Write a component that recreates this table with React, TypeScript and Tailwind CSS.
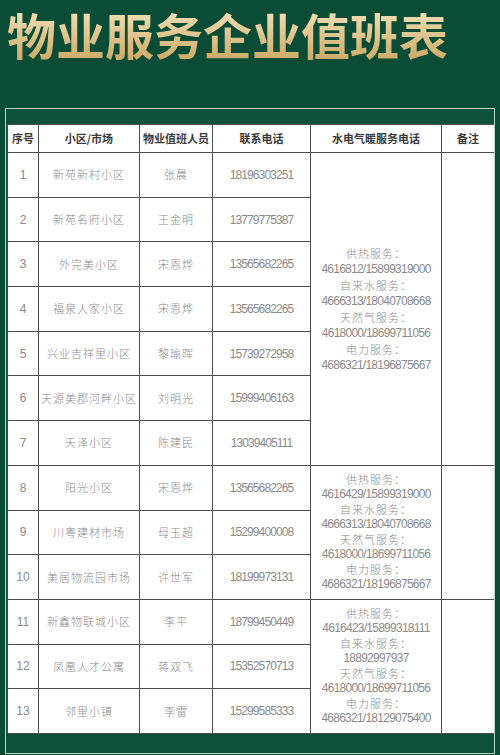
import React from "react";

type Row = { no: number; place: string; staff: string; phone: string };

const rows: Row[] = [
  { no: 1, place: "新苑新村小区", staff: "张晨", phone: "18196303251" },
  { no: 2, place: "新苑名府小区", staff: "王金明", phone: "13779775387" },
  { no: 3, place: "外完美小区", staff: "宋恩烨", phone: "13565682265" },
  { no: 4, place: "福泉人家小区", staff: "宋恩烨", phone: "13565682265" },
  { no: 5, place: "兴业吉祥里小区", staff: "黎瑜晖", phone: "15739272958" },
  { no: 6, place: "天源美郡河畔小区", staff: "刘明光", phone: "15999406163" },
  { no: 7, place: "天泽小区", staff: "陈建民", phone: "13039405111" },
  { no: 8, place: "阳光小区", staff: "宋恩烨", phone: "13565682265" },
  { no: 9, place: "川粤建材市场", staff: "母玉超", phone: "15299400008" },
  { no: 10, place: "美居物流园市场", staff: "许世军", phone: "18199973131" },
  { no: 11, place: "新鑫物联城小区", staff: "李平", phone: "18799450449" },
  { no: 12, place: "凤凰人才公寓", staff: "蒋双飞", phone: "15352570713" },
  { no: 13, place: "邻里小镇", staff: "李雷", phone: "15299585333" },
];

// service phone blocks, merged over several rows
const groups: { start: number; span: number; tight: boolean; lines: string[] }[] = [
  {
    start: 1,
    span: 7,
    tight: false,
    lines: [
      "供热服务：",
      "4616812/15899319000",
      "自来水服务：",
      "4666313/18040708668",
      "天然气服务：",
      "4618000/18699711056",
      "电力服务：",
      "4686321/18196875667",
    ],
  },
  {
    start: 8,
    span: 3,
    tight: true,
    lines: [
      "供热服务：",
      "4616429/15899319000",
      "自来水服务：",
      "4666313/18040708668",
      "天然气服务：",
      "4618000/18699711056",
      "电力服务：",
      "4686321/18196875667",
    ],
  },
  {
    start: 11,
    span: 3,
    tight: true,
    lines: [
      "供热服务：",
      "4616423/15899318111",
      "自来水服务：",
      "18892997937",
      "天然气服务：",
      "4618000/18699711056",
      "电力服务：",
      "4686321/18129075400",
    ],
  },
];

const cjk = "font-['Noto_Sans_CJK_SC',sans-serif]";
const num = "font-['Liberation_Sans',Arial,sans-serif]";

const headers = ["序号", "小区/市场", "物业值班人员", "联系电话", "水电气暖服务电话", "备注"];
const widths = ["w-[31px]", "w-[101px]", "w-[73px]", "w-[98px]", "w-[131px]", "w-[53px]"];

export default function App() {
  return (
    <div className="w-[500px] h-[755px] overflow-hidden bg-[#0b4c36]">
      <div className="h-[108px] pl-[7px] pt-[2px]">
        <h1
          className={`${cjk} inline-block text-[49px] leading-[64px] font-bold bg-linear-to-b from-[#f6e9c2] to-[#c9a45e] bg-clip-text text-transparent`}
        >
          物业服务企业值班表
        </h1>
      </div>

      <div className="mx-[5px] h-[646px] overflow-hidden border border-[#bcd3c2] bg-[#0c5139] pt-[15px] pl-px">
        <table className="w-[487px] border-collapse bg-white table-fixed">
          <thead>
            <tr className="h-[28px]">
              {headers.map((h, i) => (
                <th
                  key={h}
                  className={`${widths[i]} ${cjk} border border-[#4d4d4d] p-0 text-center text-[11px] leading-none font-semibold text-[#3a3a3a]`}
                >
                  {h}
                </th>
              ))}
            </tr>
          </thead>
          <tbody>
            {rows.map((r) => {
              const g = groups.find((x) => x.start === r.no);
              return (
                <tr key={r.no} className="h-[44.7px]">
                  <td className={`${num} border border-[#4d4d4d] p-0 text-center text-[12px] leading-none text-[#8a8a8a]`}>
                    {r.no}
                  </td>
                  <td
                    className={`${cjk} border border-[#4d4d4d] p-0 text-center text-[11px] leading-none font-light tracking-[1px] text-[#8a8a8a]`}
                  >
                    {r.place}
                  </td>
                  <td
                    className={`${cjk} border border-[#4d4d4d] p-0 text-center text-[11px] leading-none font-light tracking-[1px] text-[#8a8a8a]`}
                  >
                    {r.staff}
                  </td>
                  <td
                    className={`${num} border border-[#4d4d4d] p-0 text-center text-[12px] leading-none tracking-[-0.9px] text-[#8a8a8a]`}
                  >
                    {r.phone}
                  </td>
                  {g && (
                    <>
                      <td
                        rowSpan={g.span}
                        className="border border-[#4d4d4d] p-0 text-center align-middle text-[11px] leading-none"
                      >
                        <div className="flex flex-col items-center">
                          {g.lines.map((l, i) =>
                            i % 2 === 0 ? (
                              <span
                                key={i}
                                className={`${cjk} text-[11px] ${g.tight ? "leading-[15px]" : "leading-[16px]"} font-light tracking-[1px] text-[#8a8a8a]`}
                              >
                                {l}
                              </span>
                            ) : (
                              <span
                                key={i}
                                className={`${num} text-[12px] ${g.tight ? "leading-[15px]" : "leading-[16px]"} tracking-[-0.75px] text-[#8a8a8a]`}
                              >
                                {l}
                              </span>
                            )
                          )}
                        </div>
                      </td>
                      <td rowSpan={g.span} className="border border-[#4d4d4d] p-0" />
                    </>
                  )}
                </tr>
              );
            })}
          </tbody>
        </table>
      </div>
    </div>
  );
}
